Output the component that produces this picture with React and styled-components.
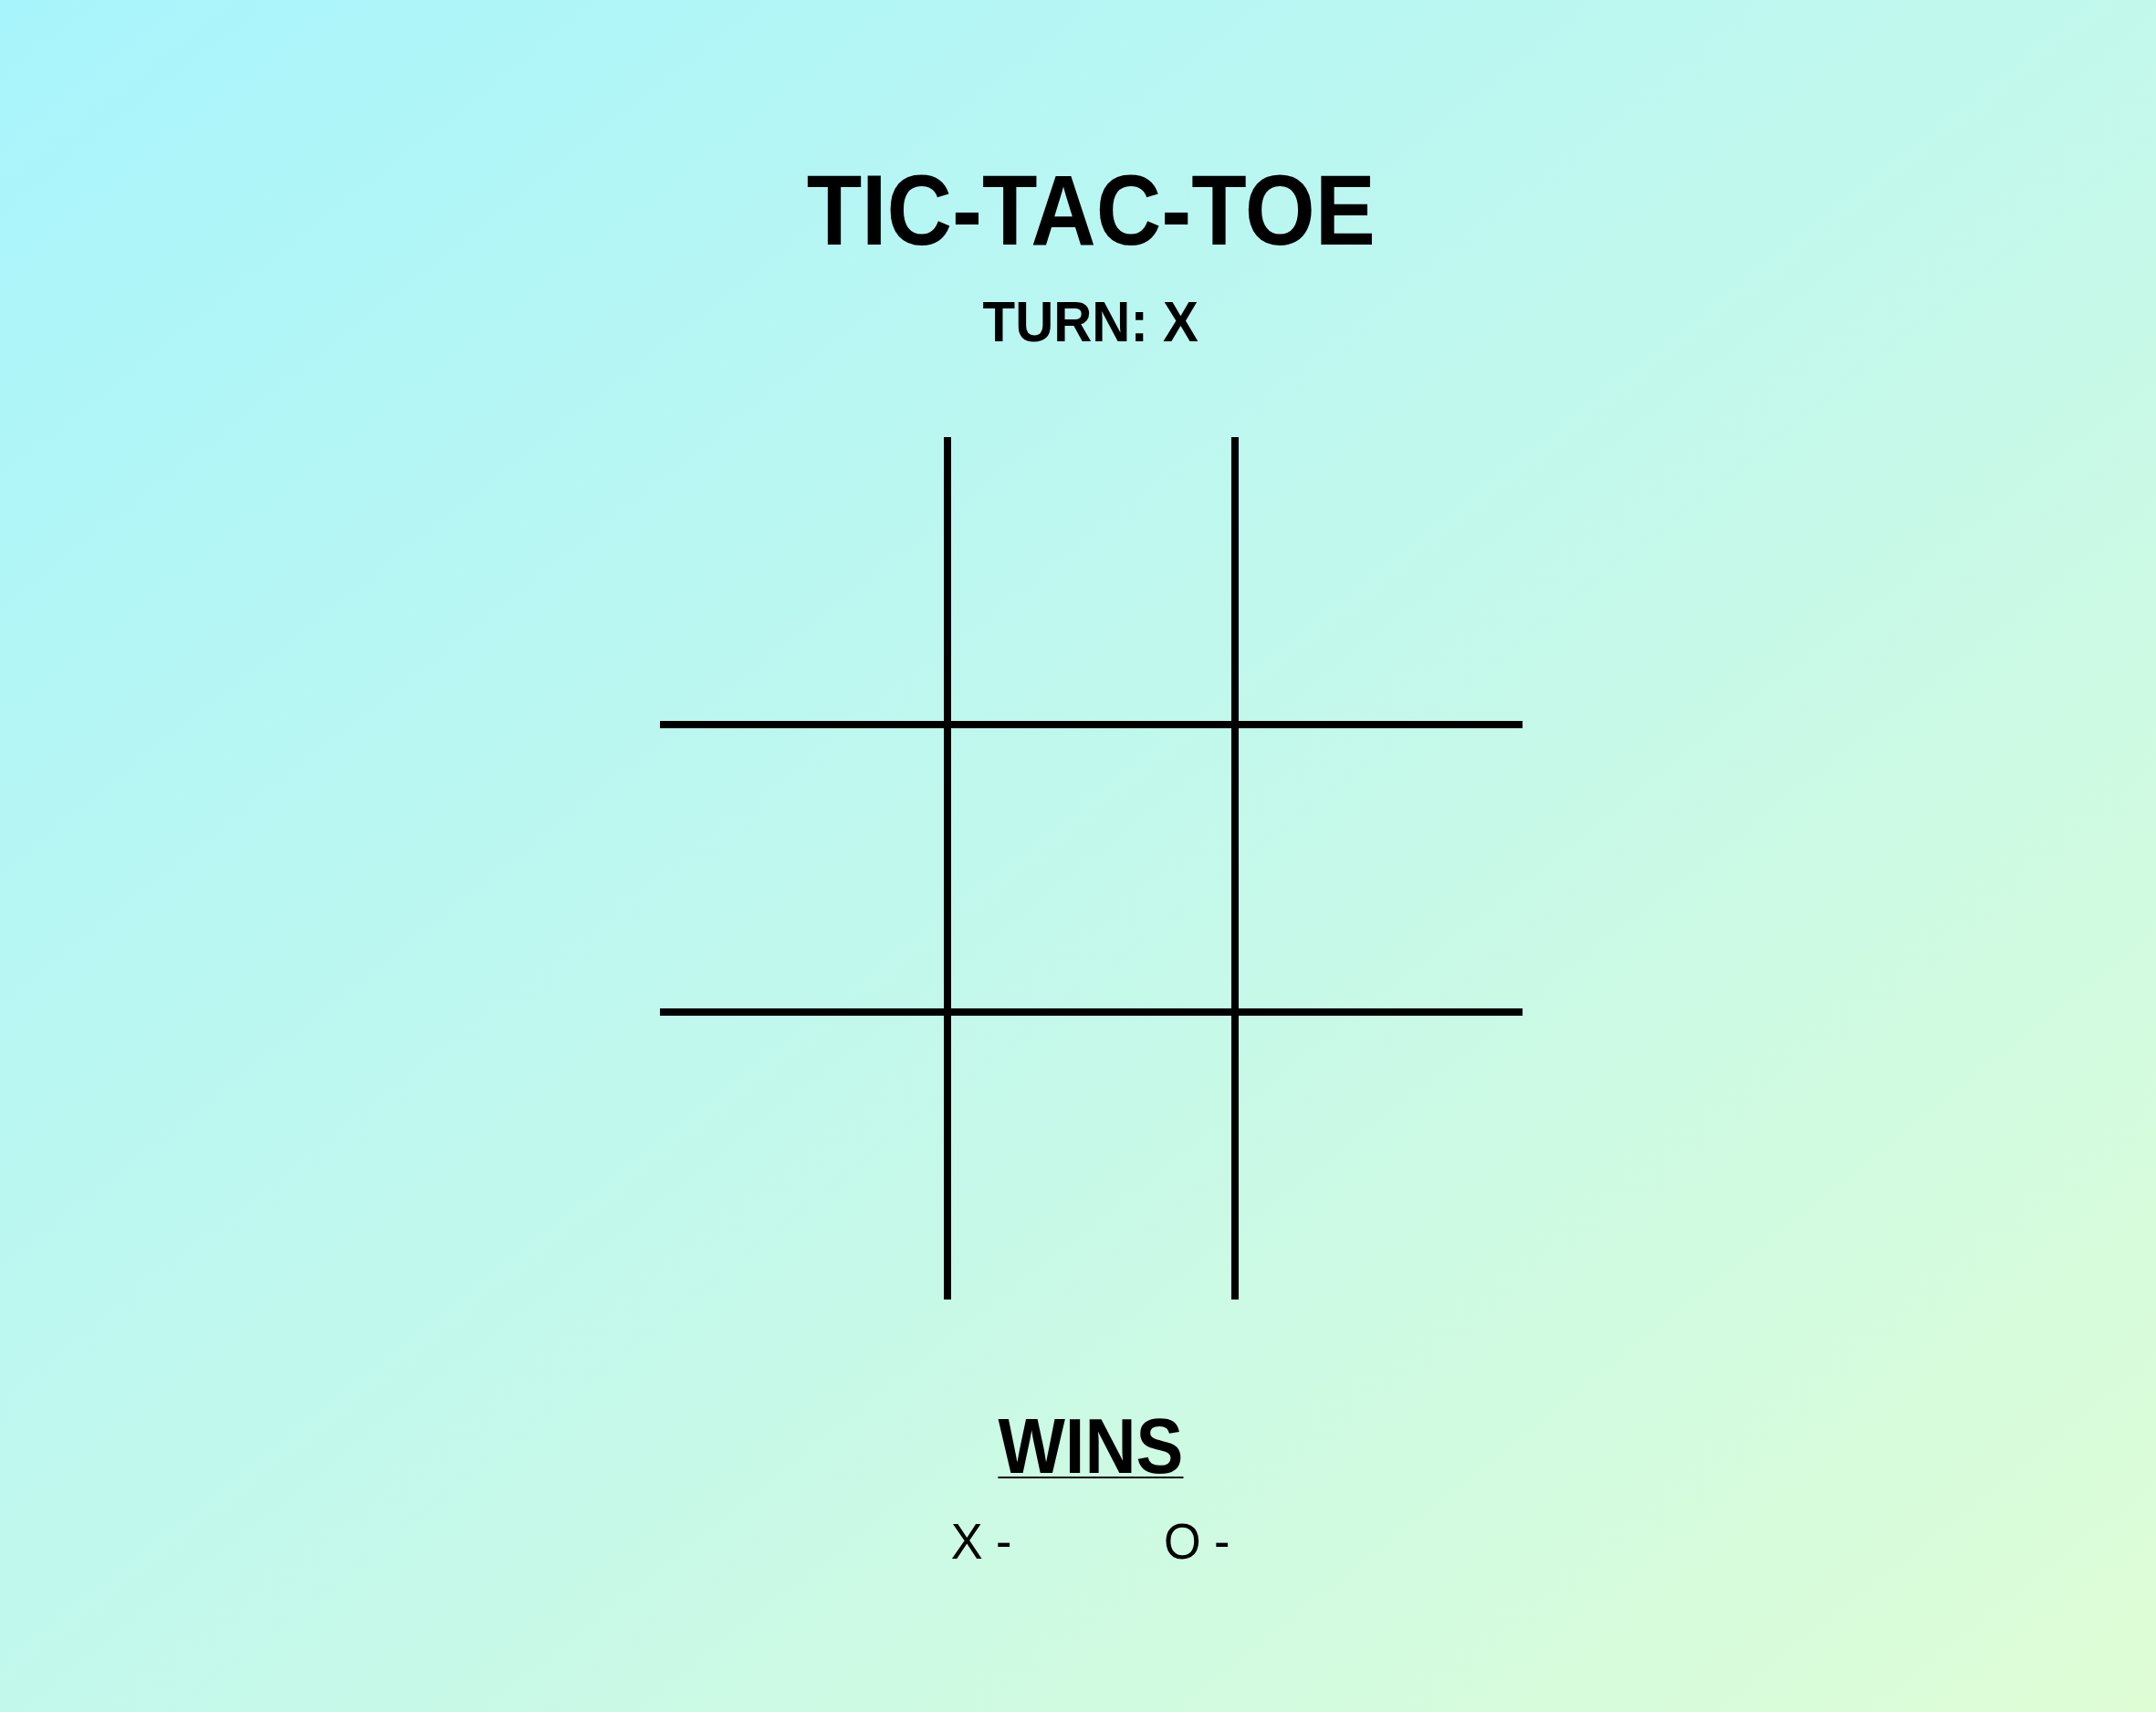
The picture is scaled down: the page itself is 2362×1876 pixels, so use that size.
import React, { useState } from "react"
import styled, { createGlobalStyle } from "styled-components"

const GlobalStyle = createGlobalStyle`
  html, body {
    margin: 0;
    padding: 0;
  }
  body {
    font-family: "Liberation Sans", Arial, sans-serif;
    color: #000;
  }
`

const Main = styled.div`
  min-height: 1876px;
  box-sizing: border-box;
  background: linear-gradient(to bottom right, #a8f4fc 0%, #c2f8ec 50%, #defdd5 100%);
  display: flex;
  flex-direction: column;
  align-items: center;
  padding: 175px 0 0 28px;
`

// the original face is a narrower grotesque, squeeze Liberation to fit
const Title = styled.h1`
  margin: 0;
  font-size: 110px;
  line-height: 1;
  font-weight: 700;
  transform: scaleX(0.9);
`

const Turn = styled.div`
  margin-top: 36px;
  font-size: 63px;
  line-height: 1;
  font-weight: 700;
  transform: scaleX(0.925);
`

const Board = styled.div`
  margin-top: 95px;
  display: grid;
  grid-template-columns: repeat(3, 315px);
  grid-template-rows: repeat(3, 315px);
`

const Cell = styled.div`
  box-sizing: border-box;
  border-style: solid;
  border-color: #000;
  border-width: ${(p) => (p.$row > 0 ? 4 : 0)}px ${(p) => (p.$col < 2 ? 4 : 0)}px
    ${(p) => (p.$row < 2 ? 4 : 0)}px ${(p) => (p.$col > 0 ? 4 : 0)}px;
  cursor: pointer;
`

const Wins = styled.h2`
  margin: 118px 0 0;
  font-size: 85px;
  line-height: 1;
  font-weight: 700;
  transform: scaleX(0.915);
  text-decoration: underline;
  text-decoration-thickness: 2px;
  text-underline-offset: 4px;
`

const Scores = styled.div`
  margin-top: 35px;
  display: flex;
  gap: 163px;
`

const Score = styled.div`
  font-size: 55px;
  line-height: 1;
  font-weight: 400;
  transform: scaleX(0.95);
`

export default function App() {
  const [board] = useState(Array(9).fill(""))
  const [turn] = useState("X")
  const [wins] = useState({ X: "", O: "" })

  return (
    <Main>
      <GlobalStyle />
      <Title>TIC-TAC-TOE</Title>
      <Turn>TURN: {turn}</Turn>
      <Board>
        {board.map((value, idx) => (
          <Cell key={idx} $row={Math.floor(idx / 3)} $col={idx % 3}>
            {value}
          </Cell>
        ))}
      </Board>
      <Wins>WINS</Wins>
      <Scores>
        <Score>X - {wins.X}</Score>
        <Score>O - {wins.O}</Score>
      </Scores>
    </Main>
  )
}
